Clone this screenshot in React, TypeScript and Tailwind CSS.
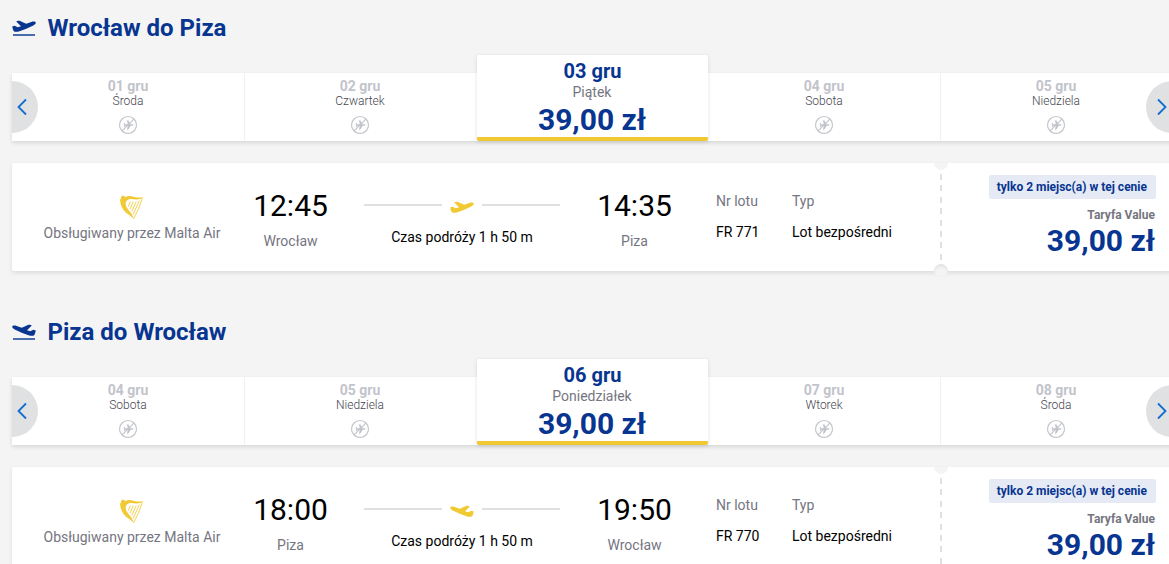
import clsx from 'clsx'

interface DateOption {
  date: string
  day: string
  price?: string
}

interface Flight {
  direction: 'outbound' | 'inbound'
  from: string
  to: string
  departure: string
  arrival: string
  number: string
  dates: DateOption[]
}

const flights: Flight[] = [
  {
    direction: 'outbound',
    from: 'Wrocław',
    to: 'Piza',
    departure: '12:45',
    arrival: '14:35',
    number: 'FR 771',
    dates: [
      { date: '01 gru', day: 'Środa' },
      { date: '02 gru', day: 'Czwartek' },
      { date: '03 gru', day: 'Piątek', price: '39,00 zł' },
      { date: '04 gru', day: 'Sobota' },
      { date: '05 gru', day: 'Niedziela' },
    ],
  },
  {
    direction: 'inbound',
    from: 'Piza',
    to: 'Wrocław',
    departure: '18:00',
    arrival: '19:50',
    number: 'FR 770',
    dates: [
      { date: '04 gru', day: 'Sobota' },
      { date: '05 gru', day: 'Niedziela' },
      { date: '06 gru', day: 'Poniedziałek', price: '39,00 zł' },
      { date: '07 gru', day: 'Wtorek' },
      { date: '08 gru', day: 'Środa' },
    ],
  },
]

function Plane({ className }: { className?: string }) {
  return (
    <svg viewBox="0 0 24 12" className={className} fill="currentColor" aria-hidden="true">
      <path d="M.2 6.400 2.600 5.700l3.200 1.600 3.200-1L4.200 1.500C5 .7 6.500.5 7.500.8l6.700 3 5.200-1.900c1.900-.6 3.900-.5 4.300.4.4 1.200-.8 2.300-2.400 3.100l-7 3.300-6.800 2.500c-1.900.6-4.200.9-5.400.2C1 10.400.8 8.500.2 6.400Z" />
    </svg>
  )
}

function HarpLogo() {
  return (
    <svg viewBox="0 0 72 72" className="h-6 w-6 text-[#f1c933]" fill="none" stroke="currentColor" aria-hidden="true">
      <path
        d="M5 4c4-3 10-1 10 3 7-4 16-5 25-2 10 3 20 3 32 2-8 6-20 8-31 6-8-2-16-1-21 4-5 6-4 14 1 22 6 9 16 17 20 33C32 61 13 54 6 37 2 29 1 23 1 18c-2-3 0-6 3-8C2 8 3 6 5 4Z"
        fill="currentColor"
        stroke="none"
      />
      <path d="M67 11 56 41 41 71" strokeWidth="2.500" />
      <path d="m31 20-6 15M40 19l-10 24M49 19 35 50M58 17 39 59" strokeWidth="2.600" />
    </svg>
  )
}

function NoFlights() {
  return (
    <svg viewBox="0 0 20 20" className="h-5 w-5 text-[#c2c4cb]" fill="none" stroke="currentColor" aria-hidden="true">
      <circle cx="10" cy="10" r="8.500" strokeWidth="1.200" />
      <path d="m4.200 15.800 11.600-11.600" strokeWidth="1.100" />
      <path
        d="M5.600 8h.8l1.100 1.300h2.300L9 5.200h1.200l2.500 4.100h1.800c1.300 0 1.300 1.400 0 1.400h-1.800l-2.500 4.100H9l.8-4.100H7.500L6.400 12h-.8l.5-2Z"
        fill="currentColor"
        stroke="none"
      />
    </svg>
  )
}

function Chevron({ className }: { className?: string }) {
  return (
    <svg viewBox="0 0 10 18" className={className} fill="none" stroke="currentColor" strokeWidth="1.800" aria-hidden="true">
      <path d="M9 1.500 1.500 9 9 16.500" />
    </svg>
  )
}

function DateCarousel({ dates }: { dates: DateOption[] }) {
  return (
    <div className="relative flex h-[68px] w-[1160px] items-end bg-white shadow-[0_2px_4px_rgba(0,0,0,0.12)]">
      {dates.map((item, i) =>
        item.price ? (
          <button
            key={item.date}
            className="relative ml-px flex h-[86px] w-[231px] flex-col items-center rounded-[2px] border-b-4 border-[#f1c933] bg-white pt-1 shadow-[0_1px_4px_rgba(0,0,0,0.12)]"
          >
            <span className="text-[20px] leading-6 font-bold text-[#073590]">{item.date}</span>
            <span className="pr-px text-sm leading-[18px] text-[#75757f]">{item.day}</span>
            <span className="mt-px pr-px text-[30px] leading-9 font-bold text-[#073590]">{item.price}</span>
          </button>
        ) : (
          <button
            key={item.date}
            className={clsx(
              'flex h-[68px] w-[232px] flex-col items-center pt-[5px]',
              (i === 1 || i === 4) && 'border-l border-[#f1f1f1] pr-px'
            )}
          >
            <span className="text-sm leading-4 font-bold text-[#c2c4cb]">{item.date}</span>
            <span className="mb-[7px] text-xs leading-[14px] font-light text-[#44444f]">{item.day}</span>
            <NoFlights />
          </button>
        )
      )}
      <div className="absolute top-[8px] left-0 flex h-[52px] w-[26px] items-center rounded-r-full bg-[#e0e1e3] pl-[5px]">
        <Chevron className="h-[18px] w-2.5 text-[#146cd0]" />
      </div>
      <div className="absolute top-[8px] right-0 flex h-[52px] w-[26px] items-center rounded-l-full bg-[#e0e1e3] pl-[11px]">
        <Chevron className="h-[18px] w-2.5 -scale-x-100 text-[#146cd0]" />
      </div>
    </div>
  )
}

function FlightTime({ time, city }: { time: string; city: string }) {
  return (
    <div className="flex w-[77px] flex-col items-center pt-[25px]">
      <span className="text-[30px] leading-9">{time}</span>
      <span className="mt-[7px] text-sm leading-5 text-[#75757f]">{city}</span>
    </div>
  )
}

function FlightDetail({ label, value }: { label: string; value: string }) {
  return (
    <div className="flex flex-col pt-7 text-sm leading-5">
      <span className="text-[#75757f]">{label}</span>
      <span className="mt-[11px]">{value}</span>
    </div>
  )
}

function FlightCard({ flight }: { flight: Flight }) {
  return (
    <div className="relative flex h-[108px] w-[1160px] rounded-[2px] bg-white shadow-[0_2px_4px_rgba(0,0,0,0.1)]">
      <div className="flex w-[240px] flex-col items-center pt-8">
        <HarpLogo />
        <span className="mt-1 text-sm leading-5 text-[#75757f]">Obsługiwany przez Malta Air</span>
      </div>
      <FlightTime time={flight.departure} city={flight.from} />
      <div className="mr-9 ml-[35px] flex w-[196px] flex-col items-center pt-[38px]">
        <div className="flex w-full justify-between">
          <div className="mt-[3px] h-[2px] w-[78px] bg-[#dfe0e1]" />
          <Plane
            className={clsx('h-3 w-6 text-[#f1c933]', flight.direction === 'inbound' && '-scale-x-100')}
          />
          <div className="mt-[3px] h-[2px] w-[78px] bg-[#dfe0e1]" />
        </div>
        <span className="mt-3.5 text-sm leading-5">Czas podróży 1 h 50 m</span>
      </div>
      <FlightTime time={flight.arrival} city={flight.to} />
      <div className="ml-[43px] w-[76px]">
        <FlightDetail label="Nr lotu" value={flight.number} />
      </div>
      <div className="w-[148px]">
        <FlightDetail label="Typ" value="Lot bezpośredni" />
      </div>

      {/* Ticket tear line */}
      <div className="mt-[11px] h-[86px] w-[2px] bg-[repeating-linear-gradient(to_bottom,#dfe0e1_0,#dfe0e1_6px,transparent_6px,transparent_11.4px)]" />
      <div className="absolute top-0 left-[922px] h-[7px] w-[14px] rounded-b-full bg-[#f4f4f4]" />
      <div className="absolute -bottom-1 left-[922px] h-[11px] w-[14px] rounded-t-[7px] bg-[#f4f4f4] shadow-[inset_0_2px_3px_rgba(0,0,0,0.08)]" />

      <div className="flex flex-1 flex-col items-end pt-3 pr-4">
        <span className="rounded-[2px] bg-[#e6eaf4] pr-[9px] pl-2 text-xs leading-6 font-bold text-[#073590]">
          tylko 2 miejsc(a) w tej cenie
        </span>
        <span className="mt-2 pr-px text-xs leading-4 font-bold text-[#75757f]">Taryfa Value</span>
        <span className="pr-px text-[30px] leading-9 font-bold text-[#073590]">39,00 zł</span>
      </div>
    </div>
  )
}

export default function App() {
  return (
    <div className="h-[564px] w-full overflow-hidden bg-[#f4f4f4] pl-3 font-['Roboto',sans-serif] text-black">
      {flights.map((flight) => (
        <section key={flight.number} className="h-[304px] pt-3">
          <h2 className="mb-[29px] flex h-8 items-center text-2xl font-bold text-[#073590]">
            <span className="mr-[11.500px] flex w-6 flex-col">
              <Plane
                className={clsx('h-3 w-6', flight.direction === 'inbound' && '-scale-x-100')}
              />
              <span className="mt-0.5 ml-px h-[2px] w-[22px] bg-[#4a6cb0]" />
            </span>
            {flight.from} do {flight.to}
          </h2>
          <DateCarousel dates={flight.dates} />
          <div className="mt-[22px]">
            <FlightCard flight={flight} />
          </div>
        </section>
      ))}
    </div>
  )
}
